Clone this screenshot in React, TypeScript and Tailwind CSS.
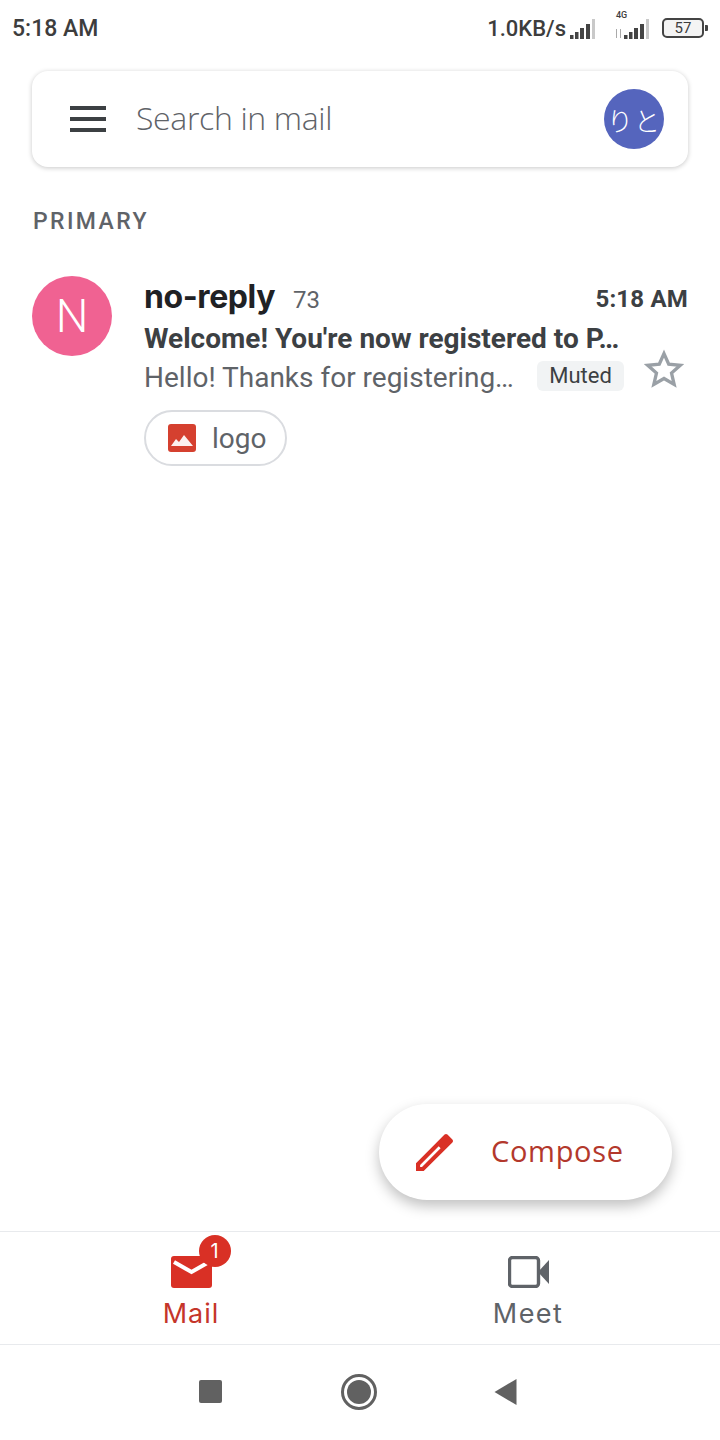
const Bars = () => (
  <svg viewBox="0 0 28 22" className="w-[30px] h-[22px]">
    <rect x="0" y="17" width="3.5" height="4" fill="#444" />
    <rect x="5" y="14" width="3.5" height="7" fill="#444" />
    <rect x="10" y="10" width="4" height="11" fill="#444" />
    <rect x="16" y="6" width="4" height="15" fill="#444" />
    <rect x="22" y="1" width="3" height="20" fill="#c9c9c9" />
  </svg>
);

const StatusBar = () => (
  <div className="h-[58px] pl-3 pr-[12px] pt-[1px] flex items-center justify-between text-[#3d3d3d] font-['Roboto',sans-serif] font-medium">
    <span className="text-[23px]">5:18 AM</span>
    <div className="flex items-center -mt-[3px]">
      <span className="text-[22px]">1.0KB/s</span>
      <span className="ml-[3px] mt-[1px]">
        <Bars />
      </span>
      <div className="relative ml-[17px] mt-[1px] pl-[7px] flex items-center">
        <span className="absolute left-0 -top-[7px] text-[9px] leading-none">4G</span>
        <span className="absolute left-0 top-[11px] w-[5px] h-[9px] border-x border-[#aaa]" />
        <Bars />
      </div>
      <div className="ml-[9px] w-[42px] h-[20px] border-2 border-[#444] rounded-[5px] flex items-center justify-center text-[15px] leading-none font-normal bg-[#f4f4f4]">
        57
      </div>
      <div className="ml-[1px] w-[3px] h-[6px] bg-[#444] rounded-r-[1px]" />
    </div>
  </div>
);

const SearchCard = () => (
  <div className="mt-[13px] mx-8 h-[96px] bg-white rounded-[16px] shadow-[0_1px_5px_rgba(0,0,0,0.22)] flex items-center pl-[38px] pr-[24px]">
    <div className="w-[36px] flex flex-col gap-[7px]">
      <div className="h-[4px] bg-[#3c4043]" />
      <div className="h-[4px] bg-[#3c4043]" />
      <div className="h-[4px] bg-[#3c4043]" />
    </div>
    <span className="ml-[30px] -mt-[2px] flex-1 text-[#5f6368] text-[32px] font-['Open_Sans',sans-serif] font-light tracking-[-0.35px]">Search in mail</span>
    <div className="w-[60px] h-[60px] rounded-full bg-[#5565bd] text-white flex items-center justify-center text-[26px] font-['Noto_Sans_CJK_JP',sans-serif] font-light tracking-[1px]">
      りと
    </div>
  </div>
);

const MailRow = () => (
  <div className="mt-[39px] ml-8 mr-8 flex font-['Roboto',sans-serif]">
    <div className="w-[80px] h-[80px] rounded-full bg-[#f06292] text-white flex items-center justify-center text-[46px] font-light shrink-0">
      N
    </div>
    <div className="ml-8 flex-1 min-w-0">
      <div className="-mt-[3px] flex items-baseline justify-between h-[48px]">
        <div className="flex items-baseline">
          <span className="text-[32px] font-bold text-[#202124] font-['Inter',sans-serif] tracking-[-0.4px]">no-reply</span>
          <span className="ml-[18px] text-[24px] text-[#5f6368]">73</span>
        </div>
        <span className="text-[24px] font-bold tracking-[0.2px] text-[#3c4043] -translate-y-[1px]">5:18 AM</span>
      </div>
      <div className="text-[28px] leading-[36px] font-bold tracking-[0px] text-[#3c4043] whitespace-nowrap">Welcome! You're now registered to P…</div>
      <div className="mt-[1px] flex items-center">
        <span className="w-[393px] text-[28px] leading-[40px] text-[#5f6368] whitespace-nowrap">Hello! Thanks for registering…</span>
        <span className="w-[87px] h-[30px] rounded-[6px] bg-[#f1f3f4] text-[#3c4043] text-[22px] flex items-center justify-center -mt-[5px]">Muted</span>
        <svg viewBox="0 0 24 24" className="ml-[19px] -mt-[18px] w-[42px] h-[42px]" fill="none" stroke="#9aa0a6" strokeWidth="1.9">
          <path d="M12 3.2l2.7 6.1 6.6.6-5 4.4 1.5 6.5L12 17.4l-5.8 3.4 1.5-6.5-5-4.4 6.6-.6z" />
        </svg>
      </div>
      <div className="mt-[12px] w-[143px] h-[56px] border-2 border-[#dadce0] rounded-full flex items-center pl-[22px]">
        <svg viewBox="0 0 28 28" className="w-[28px] h-[28px]">
          <rect width="28" height="28" rx="3" fill="#d5402f" />
          <path d="M3 22l5-7 3 3 5-7 9 11z" fill="#fff" opacity="0.92" />
        </svg>
        <span className="ml-4 mt-[1px] text-[28px] text-[#5f6368]">logo</span>
      </div>
    </div>
  </div>
);

const Compose = () => (
  <div className="self-end mr-[48px] mb-[31px] w-[293px] h-[96px] rounded-full bg-white shadow-[0_6px_14px_rgba(0,0,0,0.25)] flex items-center pl-[37px]">
    <svg viewBox="3 3 18 18" className="w-[37px] h-[37px]" fill="#d93025" fillRule="evenodd">
      <path d="M3 21v-3.75L16.9 3.3c.4-.4 1-.4 1.4 0l2.4 2.4c.4.4.4 1 0 1.4L6.75 21zM5 19h.92l9.06-9.06-.92-.92L5 18.08z" />
    </svg>
    <span className="ml-[38px] -mt-[2px] text-[29px] text-[#b3382c] font-['Open_Sans',sans-serif] tracking-[0.7px]">Compose</span>
  </div>
);

const BottomTabs = () => (
  <div className="h-[114px] border-y border-[#e8eaed] flex font-['Inter',sans-serif]">
    <div className="w-[382px] flex flex-col items-center pt-[24px]">
      <div className="relative">
        <svg viewBox="0 0 41 32" className="w-[41px] h-[32px]">
          <rect width="41" height="32" rx="3" fill="#d93025" />
          <path d="M3 6l17.5 10L38 6" fill="none" stroke="#fff" strokeWidth="4" />
        </svg>
        <span className="absolute -top-[21px] left-[28px] w-[32px] h-[32px] rounded-full bg-[#d93025] text-white text-[20px] flex items-center justify-center">1</span>
      </div>
      <span className="mt-[6px] text-[27px] leading-[40px] font-normal text-[#c5352a] tracking-[1px]">Mail</span>
    </div>
    <div className="w-[292px] flex flex-col items-center pt-[24px]">
      <svg viewBox="0 0 41 32" className="w-[41px] h-[32px]">
        <rect x="1.5" y="1.5" width="29" height="29" rx="3" fill="none" stroke="#5f6368" strokeWidth="3.4" />
        <path d="M41 4v24L30 16z" fill="#5f6368" />
      </svg>
      <span className="mt-[6px] text-[27px] leading-[40px] font-normal text-[#5f6368] tracking-[1.4px]">Meet</span>
    </div>
  </div>
);

const SystemNav = () => (
  <div className="h-[95px] pb-[2px] flex items-center pl-[199px]">
    <div className="w-[23px] h-[23px] bg-[#616161] rounded-[2px]" />
    <div className="ml-[119px] w-[36px] h-[36px] rounded-full border-[3px] border-[#616161] flex items-center justify-center">
      <div className="w-[24px] h-[24px] rounded-full bg-[#616161]" />
    </div>
    <svg viewBox="0 0 22 26" className="ml-[117px] w-[23px] h-[26px]">
      <path d="M22 0v26L0 13z" fill="#616161" />
    </svg>
  </div>
);

export default function App() {
  return (
    <div className="w-[720px] h-[1440px] bg-white flex flex-col overflow-hidden">
      <StatusBar />
      <SearchCard />
      <div className="mt-[40px] ml-[33px] text-[23px] leading-[30px] font-medium tracking-[2.4px] text-[#5f6368] font-['Roboto',sans-serif]">PRIMARY</div>
      <MailRow />
      <div className="flex-1" />
      <Compose />
      <BottomTabs />
      <SystemNav />
    </div>
  );
}
